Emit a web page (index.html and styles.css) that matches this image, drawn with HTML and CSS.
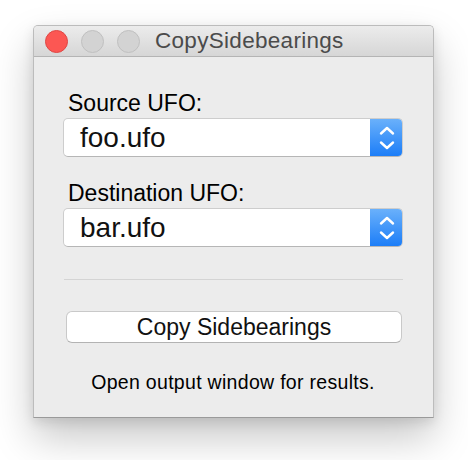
FILE: index.html
```html
<!DOCTYPE html>
<html>
<head>
<meta charset="utf-8">
<link rel="stylesheet" href="styles.css">
</head>
<body>
<div class="window">
  <div class="titlebar">
    <span class="light close"></span>
    <span class="light"></span>
    <span class="light"></span>
    <span class="title">CopySidebearings</span>
  </div>
  <div class="content">
    <div class="label first">Source UFO:</div>
    <div class="popup">
      <span class="value">foo.ufo</span>
      <span class="stepper">
        <svg width="16" height="26" viewBox="0 0 16 26"><path d="M2 8.5 L8 3 L14 8.5 M2 17.5 L8 23 L14 17.5" fill="none" stroke="#fff" stroke-width="2.4" stroke-linecap="round" stroke-linejoin="round"/></svg>
      </span>
    </div>
    <div class="label second">Destination UFO:</div>
    <div class="popup">
      <span class="value">bar.ufo</span>
      <span class="stepper">
        <svg width="16" height="26" viewBox="0 0 16 26"><path d="M2 8.5 L8 3 L14 8.5 M2 17.5 L8 23 L14 17.5" fill="none" stroke="#fff" stroke-width="2.4" stroke-linecap="round" stroke-linejoin="round"/></svg>
      </span>
    </div>
    <div class="separator"></div>
    <button class="button">Copy Sidebearings</button>
    <div class="note">Open output window for results.</div>
  </div>
</div>
</body>
</html>
```

FILE: styles.css
```css
html, body {
  margin: 0;
  padding: 0;
  background: #ffffff;
}
html { height: 100%; }
body {
  min-height: 460px;
  box-sizing: border-box;
  padding: 25px 0 0 33px;
  font-family: "Liberation Sans", Arial, sans-serif;
}
.window {
  width: 401px;
  height: 393px;
  box-sizing: border-box;
  border: 1px solid #bcbcbc;
  border-bottom-color: #9a9a9a;
  border-radius: 5px 5px 0 0;
  background: #ececec;
  box-shadow: 0 20px 40px rgba(0,0,0,0.22), 0 4px 12px rgba(0,0,0,0.10);
  display: flex;
  flex-direction: column;
}
.titlebar {
  height: 30px;
  border-bottom: 1px solid #b4b4b4;
  background: linear-gradient(#ececec, #d6d6d6);
  border-radius: 4px 4px 0 0;
  display: flex;
  align-items: center;
  padding-left: 11px;
  gap: 13px;
}
.light {
  width: 21px;
  height: 21px;
  border-radius: 50%;
  background: #d3d3d3;
  border: 1px solid #c0c0c0;
  flex: none;
}
.light.close {
  background: #fc5753;
  border-color: #df4744;
}
.title {
  margin-left: 2px;
  font-size: 22.5px;
  letter-spacing: 0.3px;
  color: #4b4b4b;
  line-height: 30px;
}
.content {
  display: flex;
  flex-direction: column;
  padding: 0 30px 0 29px;
}
.label {
  font-size: 23px;
  line-height: 26px;
  color: #000;
  padding-left: 5px;
  margin-bottom: 2px;
}
.label.first { margin-top: 33px; }
.label.second { margin-top: 23px; }
.popup {
  height: 39px;
  box-sizing: border-box;
  background: #fff;
  border: 1px solid #cdcdcd;
  border-bottom-color: #b6b6b6;
  border-radius: 5px;
  display: flex;
  align-items: stretch;
  overflow: hidden;
}
.value {
  flex: 1;
  font-size: 28px;
  line-height: 37px;
  padding-left: 16px;
  color: #111;
}
.stepper {
  width: 33px;
  margin: -1px -1px -1px 0;
  background: linear-gradient(#6cb2fb, #1a7cf7);
  border-radius: 0 5px 5px 0;
  display: flex;
  align-items: center;
  justify-content: center;
}
.separator {
  margin-top: 32px;
  margin-left: 1px;
  height: 1px;
  background: #d4d4d4;
}
.button {
  margin: 31px 1px 0 3px;
  height: 32px;
  box-sizing: border-box;
  background: #fff;
  border: 1px solid #c9c9c9;
  border-bottom-color: #b3b3b3;
  border-radius: 6px;
  font-family: "Liberation Sans", Arial, sans-serif;
  font-size: 23px;
  line-height: 30px;
  padding: 0;
  color: #111;
}
.note {
  margin-top: 27px;
  font-size: 19.5px;
  line-height: 24px;
  letter-spacing: 0.3px;
  text-align: center;
  color: #000;
}
```
